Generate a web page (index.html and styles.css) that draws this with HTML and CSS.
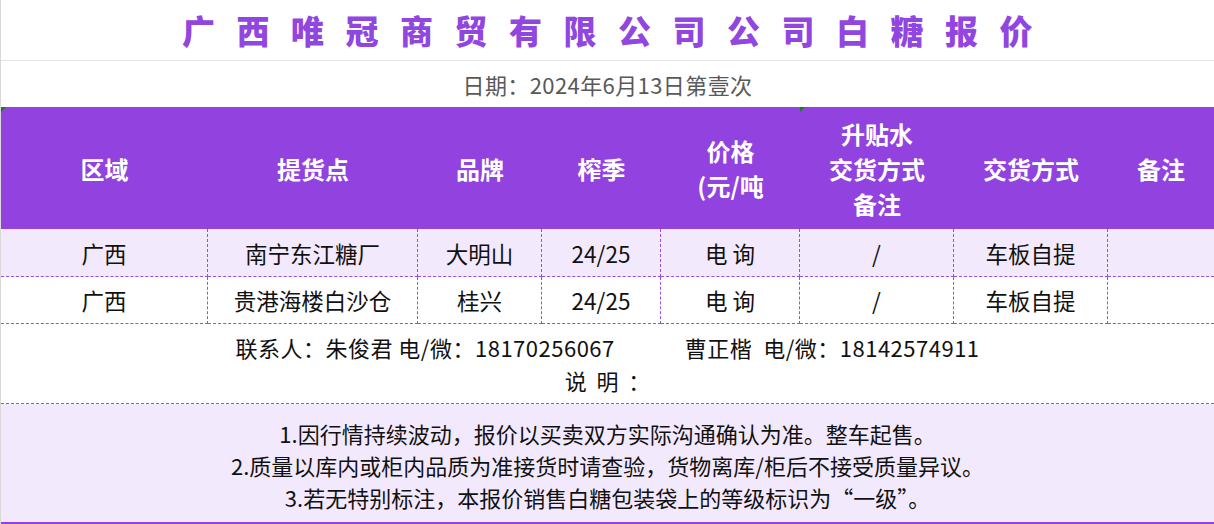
FILE: index.html
```html
<!DOCTYPE html>
<html lang="zh-CN">
<head>
<meta charset="utf-8">
<title>广西唯冠商贸有限公司公司白糖报价</title>
<link rel="stylesheet" href="styles.css">
</head>
<body>
<div class="sheet">
  <div class="title">广西唯冠商贸有限公司公司白糖报价</div>
  <div class="date">日期：2024年6月13日第壹次</div>
  <div class="grid">
    <div class="hd mark">区域</div>
    <div class="hd">提货点</div>
    <div class="hd">品牌</div>
    <div class="hd">榨季</div>
    <div class="hd"><span>价格<br>(元/吨</span></div>
    <div class="hd mark">升贴水<br>交货方式<br>备注</div>
    <div class="hd">交货方式</div>
    <div class="hd">备注</div>

    <div class="td alt">广西</div>
    <div class="td alt">南宁东江糖厂</div>
    <div class="td alt">大明山</div>
    <div class="td alt">24/25</div>
    <div class="td alt">电 询</div>
    <div class="td alt">/</div>
    <div class="td alt">车板自提</div>
    <div class="td alt last"></div>

    <div class="td">广西</div>
    <div class="td">贵港海楼白沙仓</div>
    <div class="td">桂兴</div>
    <div class="td">24/25</div>
    <div class="td">电 询</div>
    <div class="td">/</div>
    <div class="td">车板自提</div>
    <div class="td last"></div>
  </div>
  <div class="contact">
    <div class="contact-line"><span>联系人：朱俊君 电/微：18170256067</span><span class="second">曹正楷&nbsp;&nbsp;电/微：18142574911</span></div>
    <div class="explain">说&nbsp;&nbsp;明&nbsp;&nbsp;：</div>
  </div>
  <div class="notes">
    <p>1.因行情持续波动，报价以买卖双方实际沟通确认为准。整车起售。</p>
    <p>2.质量以库内或柜内品质为准接货时请查验，货物离库/柜后不接受质量异议。</p>
    <p>3.若无特别标注，本报价销售白糖包装袋上的等级标识为“一级”。</p>
  </div>
</div>
</body>
</html>
```

FILE: styles.css
```css
* { box-sizing: border-box; }
html, body { margin: 0; padding: 0; background: #fff; }
body {
  font-family: "Noto Sans CJK SC", "Noto Sans", sans-serif;
  color: #111;
}
.sheet {
  width: 1214px;
  height: 524px;
  border-left: 1px solid #d9d9d9;
  overflow: hidden;
}
.title {
  height: 61px;
  border-bottom: 1px solid #e3e3e3;
  text-align: center;
  color: #9146e0;
  font-size: 33px;
  font-weight: 900;
  letter-spacing: 21.5px;
  line-height: 60px;
  padding-left: 21px;
}
.date {
  height: 46px;
  text-align: center;
  color: #595959;
  font-size: 22px;
  line-height: 46px;
  letter-spacing: 0.4px;
}
.grid {
  display: grid;
  grid-template-columns: 207px 210px 124px 119px 139px 154px 154px 1fr;
  grid-template-rows: 122px 48px 47px;
}
.hd {
  position: relative;
  background: #9142df;
  color: #fff;
  font-weight: 700;
  font-size: 24px;
  line-height: 35px;
  display: flex;
  align-items: center;
  justify-content: center;
  text-align: center;
}
.hd.mark::before {
  content: "";
  position: absolute;
  left: 0;
  top: 0;
  border-top: 5px solid #1a7f1a;
  border-right: 5px solid transparent;
}
.td {
  display: flex;
  align-items: center;
  justify-content: center;
  font-size: 22.5px;
  border-right: 1px dashed #9a4ee6;
  border-bottom: 1px dashed #9a4ee6;
}
.td.alt { background: #f3e9fd; }
.td.last { border-right: none; }
.contact {
  height: 80px;
  border-bottom: 1px dashed #9a4ee6;
  text-align: center;
  font-size: 22px;
  padding-top: 7px;
  line-height: 33px;
}
.contact-line { display: flex; justify-content: center; letter-spacing: 0.5px; }
.contact-line .second { margin-left: 70px; }
.explain { text-align: center; }
.notes {
  height: 120px;
  background: #f3e9fd;
  border-bottom: 2px solid #9142df;
  padding-top: 13px;
  text-align: center;
  font-size: 22px;
  line-height: 32px;
}
.notes p { margin: 0; }
```
